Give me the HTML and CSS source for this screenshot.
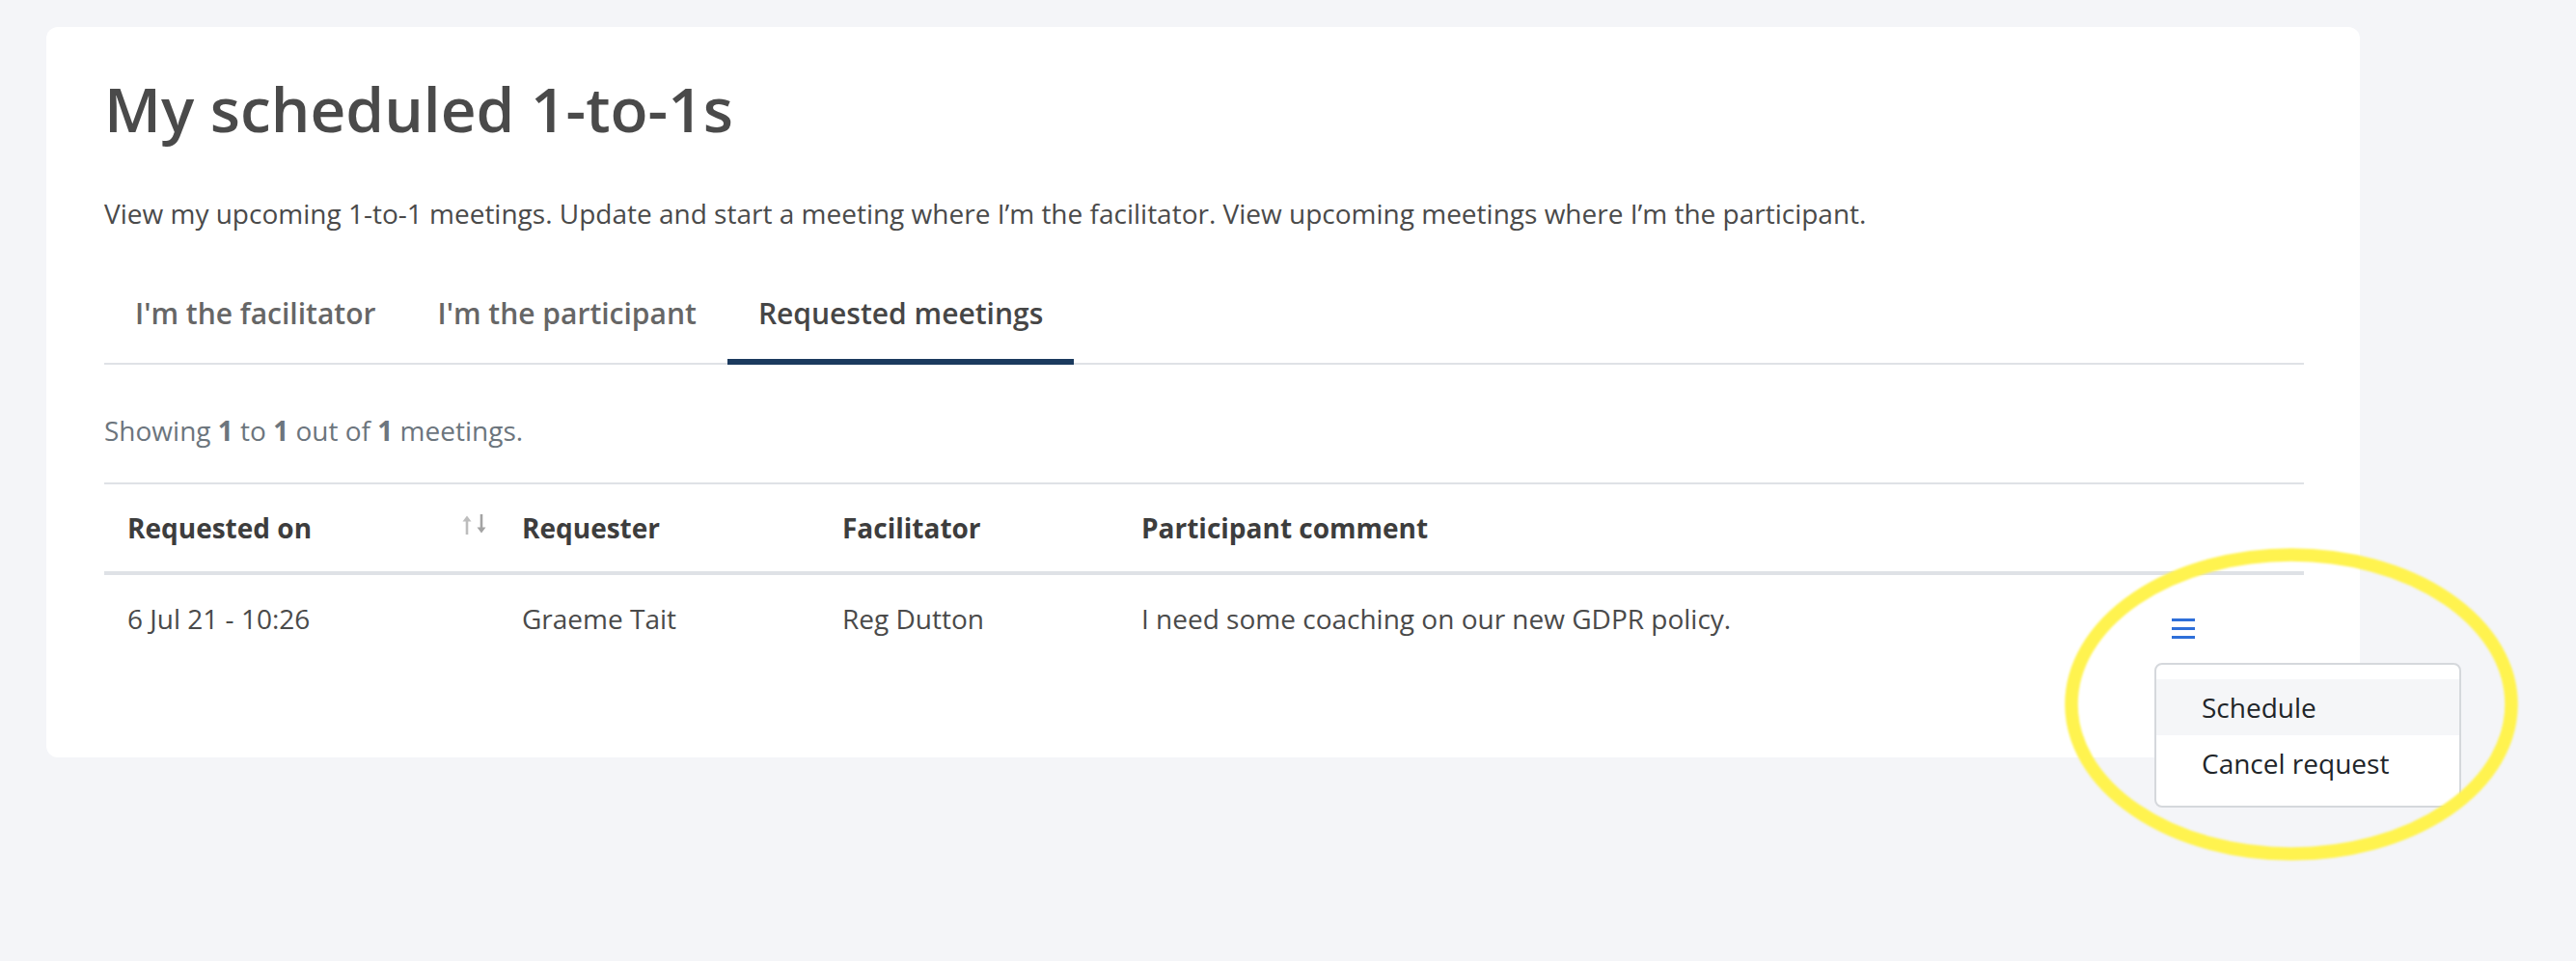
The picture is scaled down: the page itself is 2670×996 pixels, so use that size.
FILE: index.html
```html
<!DOCTYPE html>
<html lang="en">
<head>
<meta charset="utf-8">
<title>My scheduled 1-to-1s</title>
<link rel="stylesheet" href="styles.css">
</head>
<body>
<div class="page">
  <main class="card">
    <h1 class="title">My scheduled 1-to-1s</h1>
    <p class="intro">View my upcoming 1-to-1 meetings. Update and start a meeting where I’m the facilitator. View upcoming meetings where I’m the participant.</p>
    <nav class="tabs">
      <a class="tab">I'm the facilitator</a>
      <a class="tab">I'm the participant</a>
      <a class="tab tab--active">Requested meetings</a>
    </nav>
    <p class="summary">Showing <b>1</b> to <b>1</b> out of <b>1</b> meetings.</p>
    <table class="meetings">
      <colgroup>
        <col class="c1"><col class="c2"><col class="c3"><col class="c4"><col class="c5">
      </colgroup>
      <thead>
        <tr>
          <th>
            <div class="th-sort">
              <span>Requested on</span>
              <svg class="sort-icon" width="26" height="21" viewBox="0 0 26 21">
                <path d="M5 21V5" stroke="#bdbdbd" stroke-width="2.6" fill="none"/>
                <path d="M0.5 7.5L5 1.5L9.5 7.5Z" fill="#bdbdbd"/>
                <path d="M20 0V16" stroke="#a3a3a3" stroke-width="2.6" fill="none"/>
                <path d="M15.5 13.5L20 19.5L24.5 13.5Z" fill="#a3a3a3"/>
              </svg>
            </div>
          </th>
          <th>Requester</th>
          <th>Facilitator</th>
          <th>Participant comment</th>
          <th></th>
        </tr>
      </thead>
      <tbody>
        <tr>
          <td>6 Jul 21 - 10:26</td>
          <td>Graeme Tait</td>
          <td>Reg Dutton</td>
          <td>I need some coaching on our new GDPR policy.</td>
          <td class="actions">
            <div class="action-wrap">
              <button class="menu-btn" type="button" aria-label="Actions">
                <svg width="24" height="21" viewBox="0 0 24 21">
                  <rect x="0" y="0" width="24" height="3" fill="#2e6fd9"/>
                  <rect x="0" y="9" width="24" height="3" fill="#2e6fd9"/>
                  <rect x="0" y="18" width="24" height="3" fill="#2e6fd9"/>
                </svg>
              </button>
              <ul class="dropdown">
                <li class="dropdown-item dropdown-item--hover">Schedule</li>
                <li class="dropdown-item">Cancel request</li>
              </ul>
            </div>
          </td>
        </tr>
      </tbody>
    </table>
  </main>
  <svg class="highlight" width="2670" height="996" viewBox="0 0 2670 996">
    <ellipse cx="2375" cy="730" rx="228" ry="155" fill="none" stroke="#fff34f" stroke-width="13.5"/>
  </svg>
</div>
</body>
</html>
```

FILE: styles.css
```css
html, body {
  margin: 0;
  padding: 0;
}

body {
  background: #f4f5f8;
  font-family: "Open Sans", "Noto Sans", sans-serif;
  color: #4a4a4a;
}

.page {
  position: relative;
  min-height: 996px;
  padding: 28px 48px;
  box-sizing: border-box;
}

.card {
  width: 2398px;
  box-sizing: border-box;
  background: #ffffff;
  border-radius: 12px;
  padding: 48px 58px 99px 60px;
}

.title {
  margin: 0;
  font-size: 64px;
  line-height: 74px;
  font-weight: 600;
  color: #4a4a4a;
}

.intro {
  margin: 51px 0 0;
  font-size: 28px;
  line-height: 41px;
  color: #4a4a4a;
}

.tabs {
  display: flex;
  margin-top: 45px;
  border-bottom: 2px solid #dfe2e6;
}

.tab {
  padding: 16px 32px 26px;
  margin-bottom: -2px;
  border-bottom: 6px solid transparent;
  font-size: 30px;
  line-height: 43px;
  font-weight: 600;
  color: #666666;
}

.tab--active {
  border-bottom-color: #1b3a5e;
  color: #464646;
}

.summary {
  margin: 48px 0 0;
  font-size: 28px;
  line-height: 41px;
  color: #6c757d;
}

.summary b {
  font-weight: 700;
}

.meetings {
  width: 100%;
  margin-top: 33px;
  border-collapse: collapse;
  table-layout: fixed;
  border-top: 2px solid #dfe2e6;
}

.c1 { width: 409px; }
.c2 { width: 332px; }
.c3 { width: 310px; }
.c4 { width: 979px; }
.c5 { width: 250px; }

.meetings th,
.meetings td {
  padding: 24px 12px 24px 24px;
  text-align: left;
  font-size: 28px;
  line-height: 42px;
}

.meetings th {
  font-weight: 700;
  color: #3d3d3d;
  border-bottom: 4px solid #dfe2e6;
}

.meetings td {
  font-weight: 400;
  color: #4a4a4a;
}

.th-sort {
  display: flex;
  align-items: center;
  justify-content: space-between;
}

.sort-icon {
  display: block;
  margin-top: -8px;
}

.meetings td.actions {
  padding-left: 113px;
}

.action-wrap {
  position: relative;
  width: 24px;
  height: 21px;
  padding-top: 21px;
}

.menu-btn {
  display: block;
  margin: 0;
  padding: 0;
  border: 0;
  background: none;
  width: 24px;
  height: 21px;
}

.menu-btn svg {
  display: block;
}

.dropdown {
  position: absolute;
  top: 67px;
  left: -18px;
  width: 318px;
  box-sizing: border-box;
  margin: 0;
  padding: 15px 0;
  list-style: none;
  background: #ffffff;
  border: 2px solid #d5d8dc;
  border-radius: 8px;
  z-index: 2;
}

.dropdown-item {
  padding: 8px 47px;
  font-size: 28px;
  line-height: 42px;
  color: #212529;
  white-space: nowrap;
}

.dropdown-item--hover {
  background: #f5f6f8;
}

.highlight {
  position: absolute;
  top: 0;
  left: 0;
  pointer-events: none;
  z-index: 5;
  filter: blur(0.8px);
}
```
